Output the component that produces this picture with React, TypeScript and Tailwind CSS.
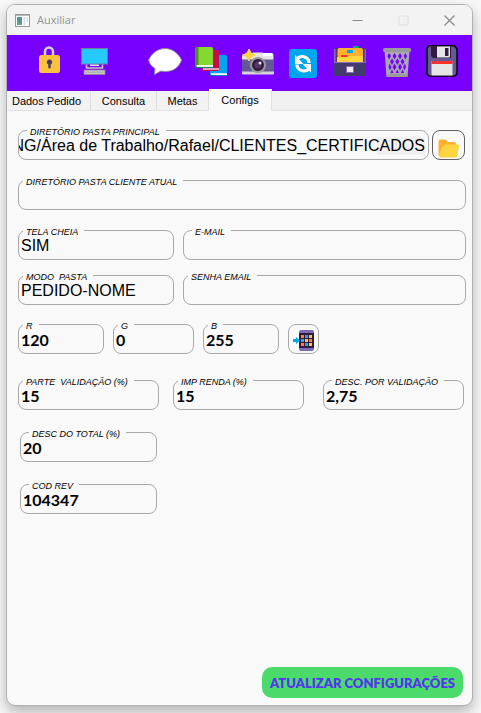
import { useEffect, useRef, useState, type ReactNode } from "react";

function Icon({ children }: { children: ReactNode }) {
  return (
    <svg viewBox="0 0 32 32" className="size-8 overflow-visible" aria-hidden="true">
      {children}
    </svg>
  );
}

const lock = (
  <Icon>
    <path d="M12 11V6.500a4 4 0 0 1 8 0V11" fill="none" stroke="#d3d3d3" strokeWidth="2.500" />
    <rect x="6" y="10" width="21" height="18" rx="2.500" fill="#f9c23c" />
    <circle cx="16.500" cy="17" r="2.600" fill="#433b6b" />
    <rect x="15.300" y="17" width="2.400" height="6.500" rx="1" fill="#433b6b" />
  </Icon>
);

const monitor = (
  <Icon>
    <rect x="2.500" y="3.500" width="26" height="15.500" fill="#26c9fc" stroke="#6d7f9b" />
    <path d="M7.500 19.500V23h16v-3.500" fill="none" stroke="#c8c8c8" strokeWidth="1.500" />
    <rect x="11" y="19.500" width="9" height="1.500" fill="#dcdce4" />
    <rect x="5" y="25" width="21" height="4.500" rx="0.500" fill="#c8c8c8" stroke="#8d8d8d" strokeWidth="0.700" />
    <path d="M6.500 27.200h18" stroke="#999" strokeWidth="1" strokeDasharray="1.500 0.800" />
  </Icon>
);

const speech = (
  <Icon>
    <path
      d="M16 3.500C23.500 3.500 29.500 8.500 32.500 15c-2.500 8-9 11.500-16 11.500-2 0-3.500-.3-4.500-.6L5.500 29.500 6 23.500C2.500 21.500 0 18.500-.3 15 2.500 8.500 8.500 3.500 16 3.500Z"
      fill="#fff"
      stroke="#8f879e"
      strokeWidth="1"
    />
  </Icon>
);

const books = (
  <Icon>
    <rect x="15" y="10" width="17" height="21" rx="1.500" fill="#00a6ed" />
    <path d="M16 28.300h16v1.700H16z" fill="#fff" />
    <path d="M15 30h17v1H15z" fill="#0074ba" />
    <rect x="7" y="5" width="17" height="21" rx="1.500" fill="#ca0b4a" />
    <path d="M8 23.300h16v1.400H8z" fill="#f3d2df" />
    <rect x="0.500" y="2" width="17.500" height="21" rx="1.500" fill="#86d72f" />
    <path d="M.5 3.500A1.500 1.500 0 0 1 2 2h1.500v18H.5z" fill="#44911b" />
    <path d="M2 20h16v2H2z" fill="#f3f3f3" />
    <path d="M.5 20v1.500A1.500 1.500 0 0 0 2 23h16v-1H2z" fill="#008463" />
  </Icon>
);

const camera = (
  <Icon>
    <path d="M1 11a2 2 0 0 1 2-2h7l2-1.500h9L22.500 8h8A2 2 0 0 1 32.500 10v5H1z" fill="#e6e6e6" />
    <path d="M22 8h9v3h-9z" fill="#fff" />
    <path d="M1 14.500h32V27H1z" fill="#635994" />
    <path d="M1 26.500h32v2a1 1 0 0 1-1 1H2a1 1 0 0 1-1-1z" fill="#d3d3d3" />
    <circle cx="17" cy="20" r="8" fill="#9b9b9b" />
    <circle cx="17" cy="20" r="6" fill="#321b41" />
    <circle cx="17" cy="20" r="3.500" fill="#533566" />
    <circle cx="19" cy="18" r="1.500" fill="#e6e6e6" />
    <path d="M8 4l2 4 4 2-4 2-2 4-2-4-4-2 4-2z" fill="#fcd53f" stroke="#fcd53f" strokeWidth="1" />
  </Icon>
);

const refresh = (
  <Icon>
    <rect x="2" y="4" width="28" height="29" rx="3" fill="#00a6ed" />
    <path d="M10 13.500c3-2.500 7-2.500 9.500-.5A6 6 0 0 1 22 18" fill="none" stroke="#fff" strokeWidth="3.200" />
    <path d="M8 10v9h8.500z" fill="#fff" />
    <path d="M22 24c-3 2.500-7 2.500-9.500.5A6 6 0 0 1 10 19.500" fill="none" stroke="#fff" strokeWidth="3.200" />
    <path d="M24 27.500v-8.500h-8.500z" fill="#fff" />
  </Icon>
);

const cardBox = (
  <Icon>
    <rect x="20" y="1" width="6" height="6" rx="1" fill="#00b26b" />
    <rect x="1" y="3" width="32" height="18" rx="1.500" fill="#533566" />
    <path d="M1 4h1.500v14H1zM31.500 4H33v14h-1.500z" fill="#8d65c5" />
    <path d="M4.500 5a2 2 0 0 1 2-2h21.500a2 2 0 0 1 2 2v13H4.500z" fill="#ffb02e" />
    <rect x="14" y="5" width="6" height="3" rx="0.500" fill="#00a6ed" />
    <path d="M4 13a1 1 0 0 1 1-1h10l2-1h12a1 1 0 0 1 1 1v6H4z" fill="#fcd53f" />
    <rect x="8" y="10" width="6.500" height="2" fill="#f8312f" />
    <path d="M1 17.500h32V30a1 1 0 0 1-1 1H2a1 1 0 0 1-1-1z" fill="#433b6b" />
    <path d="M1 17.500h32" stroke="#8d65c5" strokeWidth="1" />
    <rect x="13.500" y="21.500" width="7" height="6" fill="#f3eef8" stroke="#8d65c5" />
  </Icon>
);

const trash = (
  <Icon>
    <path d="M5.500 6h25l-2 25.500h-21z" fill="#a9a9b2" />
    <path
      d="M10 8l2 3-2 3.500-1.700-3.500zM15.500 8l2 3-2 3.500-2-3.500zM21 8l2 3-2 3.500-2-3.500zM26.500 8l1.500 3-1.500 3.500-2-3.500zM13 13.500l2 3-2 3.500-2-3.500zM18.300 13.500l2 3-2 3.500-2-3.500zM23.500 13.500l2 3-2 3.500-2-3.500zM10.500 18.500l2 3.500-1.500 3.500-1.500-3.500zM15.500 18.500l2 3.500-2 3.500-2-3.500zM21 18.500l2 3.500-2 3.500-2-3.500zM26 18.500l1 3.500-1.500 3.500-1.500-3.500zM13 24.500l1.700 3.500h-3.400zM18.300 24.500l1.700 3.500h-3.400zM23.500 24.500l1.700 3.500h-3.400z"
      fill="#7800ff"
    />
    <rect x="4" y="3" width="28" height="4" rx="1.500" fill="#9b9b9b" />
    <path d="M7.500 29h21.300l-.3 3h-21z" fill="#9b9b9b" />
  </Icon>
);

const floppy = (
  <Icon>
    <path
      d="M4 .8h25.500L32 4v25l-2 2H4l-2-2V3z"
      fill="#635994"
      stroke="#080408"
      strokeWidth="1.500"
      strokeLinejoin="round"
    />
    <path d="M6 1.500h20v11.500H8l-2-2z" fill="#321b41" />
    <path d="M12 1.500h13v9.500a1.500 1.500 0 0 1-1.500 1.500H12z" fill="#e6e6e6" />
    <rect x="20" y="3" width="3.500" height="8" fill="#321b41" />
    <rect x="6.500" y="16" width="21" height="14.500" fill="#e6e6e6" />
    <rect x="6.500" y="16" width="21" height="3" fill="#f8312f" />
  </Icon>
);

const tools = [
  { name: "Bloquear", icon: lock },
  { name: "Computador", icon: monitor },
  { name: "Mensagem", icon: speech, apart: true },
  { name: "Livros", icon: books },
  { name: "Capturar", icon: camera },
  { name: "Recarregar", icon: refresh },
  { name: "Arquivo", icon: cardBox },
  { name: "Lixeira", icon: trash },
  { name: "Salvar", icon: floppy },
];

type FieldProps = {
  id: string;
  label: string;
  value?: string;
  bold?: boolean;
  inset?: boolean;
  atEnd?: boolean;
  className: string;
};

function Field({ id, label, value = "", bold, inset, atEnd, className }: FieldProps) {
  const [text, setText] = useState(value);
  const input = useRef<HTMLInputElement>(null);

  useEffect(() => {
    if (atEnd && input.current) {
      input.current.scrollLeft = input.current.scrollWidth;
    }
  }, [atEnd]);

  return (
    <fieldset className={`h-9 min-w-0 rounded-lg border border-[#a8a8a8] ${className}`}>
      <legend
        className={`pt-[3px] pr-1.5 pl-[3px] text-[9px] leading-[10px] whitespace-pre italic ${inset ? "ml-2" : "ml-1"}`}
      >
        <label htmlFor={id}>{label}</label>
      </legend>
      <input
        id={id}
        ref={input}
        value={text}
        onChange={(e) => setText(e.target.value)}
        className={`block h-[18px] w-full text-[16px] leading-[18px] outline-none ${
          bold ? "font-['Lato',sans-serif] font-bold" : ""
        } ${
          atEnd
            ? "bg-[linear-gradient(#f0f0f0,#f0f0f0)] bg-[length:48px_100%] bg-right bg-no-repeat"
            : "pl-0.5"
        }`}
      />
    </fieldset>
  );
}

const tabs = [
  { name: "Dados Pedido", width: "w-[84px] pr-1" },
  { name: "Consulta", width: "w-[66px]" },
  { name: "Metas", width: "w-[52px]" },
];

export default function App() {
  return (
    <div className="flex min-h-screen bg-[#f8f8f8] pt-1 pr-2 pb-[7px] pl-1.5 font-['Liberation_Sans',Arial,sans-serif] text-black">
      <div className="flex flex-1 flex-col overflow-hidden rounded-[9px] border border-[#b0b0b0] bg-[#f9f9f9] shadow-[0_6px_14px_rgba(0,0,0,0.28)]">
        <header className="flex h-[30px] items-center bg-[#f3f3f3] pr-[17px] pl-2 text-[#929292]">
          <svg viewBox="0 0 15 13" className="h-[13px] w-[15px]" aria-hidden="true">
            <rect x="0.500" y="0.500" width="14" height="12" fill="#fff" stroke="#999" />
            <path d="M1 1.500h13" stroke="#b8b8b8" />
            <rect x="2" y="3" width="5" height="8" fill="#5b8fa6" />
            <path d="M2 7l5 3v1H2z" fill="#5cab7c" />
            <path d="M8.500 3h2v8h-2zM11.500 3h1.500v5h-1.500z" fill="#d8dee6" />
          </svg>
          <h1 className="ml-[7px] flex-1 font-['Open_Sans',sans-serif] text-[11px] leading-4">Auxiliar</h1>
          <div className="flex gap-[35px]">
            <button type="button" aria-label="Minimizar">
              <svg viewBox="0 0 11 11" className="size-[11px]" fill="none" stroke="#8a8a8a">
                <path d="M.5 5.500h10" />
              </svg>
            </button>
            <button type="button" aria-label="Maximizar" disabled>
              <svg viewBox="0 0 11 11" className="size-[11px]" fill="none" stroke="#dedede">
                <rect x="1" y="1" width="9" height="9" rx="1" />
              </svg>
            </button>
            <button type="button" aria-label="Fechar">
              <svg viewBox="0 0 11 11" className="size-[11px]" fill="none" stroke="#8a8a8a" strokeWidth="1.200">
                <path d="M.5.5l10 10M10.500.5l-10 10" />
              </svg>
            </button>
          </div>
        </header>

        <div role="toolbar" aria-label="Ferramentas" className="flex h-14 items-center bg-[#7800ff] pb-1 pl-[19px]">
          {tools.map((tool) => (
            <button
              key={tool.name}
              type="button"
              aria-label={tool.name}
              className={`flex w-[46px] justify-center ${tool.apart ? "ml-6" : ""}`}
            >
              {tool.icon}
            </button>
          ))}
        </div>

        <div role="tablist" className="flex h-5 items-end border-b border-[#e2e2e2] bg-[#f0f0f0] text-[11px] leading-4">
          {tabs.map((tab) => (
            <button
              key={tab.name}
              type="button"
              role="tab"
              aria-selected="false"
              className={`h-[19px] border-r border-[#dedede] bg-[#f2f2f2] whitespace-nowrap ${tab.width}`}
            >
              {tab.name}
            </button>
          ))}
          <button
            type="button"
            role="tab"
            aria-selected="true"
            className="-mb-px h-[22px] w-[63px] border-r border-[#e2e2e2] bg-[#f9f9f9] whitespace-nowrap"
          >
            Configs
          </button>
        </div>

        <form className="flex flex-1 flex-col pt-[13px] pr-1.5 pl-[11px]" onSubmit={(e) => e.preventDefault()}>
          <div className="flex items-end gap-[3px] pr-px">
            <Field
              id="pasta-principal"
              label="DIRETÓRIO PASTA PRINCIPAL"
              value="UNG/Área de Trabalho/Rafael/CLIENTES_CERTIFICADOS"
              inset
              atEnd
              className="flex-1 pr-[3px]"
            />
            <button
              type="button"
              aria-label="Escolher pasta"
              className="flex h-[30px] w-[33px] items-center justify-center rounded-lg border border-[#606060] pt-1.5"
            >
              <svg viewBox="0 0 22 19" className="h-[19px] w-[22px]" aria-hidden="true">
                <path d="M.5 2A1.500 1.500 0 0 1 2 .5h5.500L10 3h6.500A1.500 1.500 0 0 1 18 4.500V14L2 18.500.5 16z" fill="#ffb02e" />
                <path
                  d="M7 5.500h13a1.300 1.300 0 0 1 1.300 1.700L19 17.300A1.500 1.500 0 0 1 17.500 18.500H2A1.300 1.300 0 0 1 .8 17L3.500 9.500C4 8 4.500 8 5.300 7.500z"
                  fill="#fcd53f"
                />
              </svg>
            </button>
          </div>

          <Field id="pasta-cliente" label="DIRETÓRIO PASTA CLIENTE ATUAL" className="mt-3.5" />

          <div className="mt-3.5 flex gap-[9px]">
            <Field id="tela-cheia" label="TELA CHEIA" value="SIM" className="w-[156px]" />
            <Field id="email" label="E-MAIL" inset className="flex-1" />
          </div>

          <div className="mt-[9px] flex gap-[9px]">
            <Field id="modo-pasta" label="MODO  PASTA" value="PEDIDO-NOME" className="w-[156px]" />
            <Field id="senha-email" label="SENHA EMAIL" className="flex-1" />
          </div>

          <div className="mt-[13px] flex items-end gap-[9px]">
            <Field id="cor-r" label="R" value="120" bold className="w-[86px]" />
            <Field id="cor-g" label="G" value="0" bold className="w-[81px]" />
            <Field id="cor-b" label="B" value="255" bold className="w-[76px]" />
            <button
              type="button"
              aria-label="Aplicar cor"
              className="flex h-[30px] w-[31px] items-center justify-center rounded-lg border border-[#a8a8a8] pt-0.5"
            >
              <svg viewBox="0 0 21 21" className="size-[21px]" aria-hidden="true">
                <rect x="6" width="15" height="21" rx="2" fill="#7f6bb5" />
                <rect x="6" y="3" width="15" height="15" fill="#321b41" />
                <path d="M0 9h3V7l4 3.500-4 3.500v-2H0z" fill="#00a6ed" />
                <path d="M8 5h3v3H8zM16 9h3v3h-3zM8 13h3v3H8z" fill="#ff822d" />
                <path d="M12 5h3v3h-3zM8 9h3v3H8zM12 13h3v3h-3z" fill="#26a8ed" />
                <path d="M16 5h3v3h-3zM12 9h3v3h-3zM16 13h3v3h-3z" fill="#fcc53f" />
              </svg>
            </button>
          </div>

          <div className="mt-5 flex pr-0.5">
            <Field id="parte-validacao" label="PARTE  VALIDAÇÃO (%)" value="15" bold className="w-[141px]" />
            <Field id="imp-renda" label="IMP RENDA (%)" value="15" bold className="ml-3.5 w-[131px]" />
            <Field id="desc-validacao" label="DESC. POR VALIDAÇÃO" value="2,75" bold inset className="ml-auto w-[141px]" />
          </div>

          <div className="mt-4 flex flex-col gap-4 pl-0.5">
            <Field id="desc-total" label="DESC DO TOTAL (%)" value="20" bold inset className="w-[137px]" />
            <Field id="cod-rev" label="COD REV" value="104347" bold inset className="w-[137px]" />
          </div>

          <div className="mt-auto flex justify-end pr-[3px] pb-[7px]">
            <button
              type="submit"
              className="h-[31px] w-[201px] rounded-[10px] bg-[#4bdb6a] font-['Lato',sans-serif] text-[13px] leading-5 font-extrabold whitespace-nowrap text-[#5535ee]"
            >
              ATUALIZAR CONFIGURAÇÕES
            </button>
          </div>
        </form>
      </div>
    </div>
  );
}
